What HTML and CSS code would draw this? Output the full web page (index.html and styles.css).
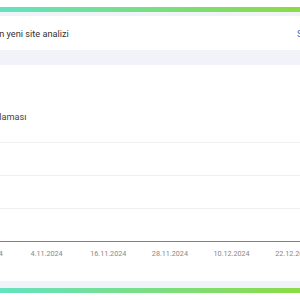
FILE: index.html
```html
<!DOCTYPE html>
<html lang="tr">
<head>
    <meta charset="UTF-8">
    <meta name="viewport" content="width=device-width, initial-scale=1.0">
    <title>Site Analizi</title>
    <link rel="stylesheet" href="styles.css">
</head>
<body>
    <div class="bar bar-top"></div>

    <main class="main">
        <!-- Latest analysis -->
        <section class="card card-head">
            <h2 class="head-title">En yeni site analizi</h2>
            <a class="head-link" href="#">Son</a>
        </section>

        <!-- Chart -->
        <section class="card card-chart">
            <h3 class="chart-title">Puan ortalaması</h3>
            <div class="plot">
                <div class="grid-row"></div>
                <div class="grid-row"></div>
                <div class="grid-row"></div>
            </div>
            <div class="axis">
                <span>23.10.2024</span>
                <span>4.11.2024</span>
                <span>16.11.2024</span>
                <span>28.11.2024</span>
                <span>10.12.2024</span>
                <span>22.12.2024</span>
            </div>
        </section>
    </main>

    <div class="bar"></div>
</body>
</html>
```

FILE: styles.css
```css
body {
    margin: 0;
    padding: 0;
    background: #fff;
    font-family: Roboto, "Liberation Sans", sans-serif;
    color: #333;
    overflow: hidden;
}
.bar {
    height: 5px;
    background: linear-gradient(90deg, #64e2c0, #8cdb46);
}
.bar-top {
    margin-top: 7px;
}
.main {
    background: #f0f3f8;
    padding: 4px 0 7px;
}
.card {
    background: #fff;
}
.card-head {
    height: 34px;
    display: flex;
    align-items: center;
    justify-content: space-between;
}
.head-title {
    margin: 0 0 0 -6px;
    font-size: 9.2px;
    font-weight: normal;
    color: #333;
}
.head-link {
    margin-right: -13px;
    font-size: 9.2px;
    color: #3d6cc0;
    text-decoration: none;
    width: 16px;
}
.card-chart {
    height: 216px;
    margin-top: 15px;
    padding-top: 46px;
    box-sizing: border-box;
}
.chart-title {
    margin: 0 0 0 -40.5px;
    height: 12px;
    line-height: 12px;
    font-size: 9.2px;
    font-weight: normal;
    color: #444;
}
.plot {
    margin-top: 19px;
}
.grid-row {
    height: 33px;
    box-sizing: border-box;
    border-top: 1px solid #f0f0f0;
}
.axis {
    display: flex;
    border-top: 1.5px solid #5a86d0;
    margin-left: -46px;
    padding-top: 7px;
}
.axis span {
    flex: 0 0 61.7px;
    text-align: center;
    font-size: 7.2px;
    line-height: 10px;
    color: #888;
    white-space: nowrap;
}
```
